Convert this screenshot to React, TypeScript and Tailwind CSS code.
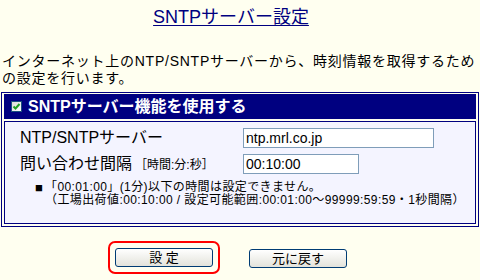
import React from 'react';

const font = "font-['Liberation_Sans','Noto_Sans_CJK_JP',sans-serif]";

function Check() {
  return (
    <span className="flex w-[11px] h-[11px] items-center justify-center bg-linear-to-br from-[#dcdcd6] to-white border border-[#1c5180]">
      <svg width="9" height="9" viewBox="0 0 9 9">
        <path d="M1.5 4.5 L3.5 6.5 L7.5 2" stroke="#21a121" strokeWidth="2" fill="none" />
      </svg>
    </span>
  );
}

function Button({ label }: { label: string }) {
  return (
    <button className="w-[98px] h-[19px] rounded-[3px] border border-[#003c74] bg-linear-to-b from-white to-[#e3e3db] text-[13px] leading-[17px] text-black">
      {label}
    </button>
  );
}

export default function App() {
  return (
    <div className={`w-[480px] h-[280px] bg-[#fffff0] text-black ${font}`}>
      <div className="pt-[6px] pr-[18px] text-center">
        <span className="text-[18px] leading-[20px] text-[#000080] underline underline-offset-2">
          SNTPサーバー設定
        </span>
      </div>

      <div className="mt-[23px] pl-[2px] text-[14px] leading-[17px] tracking-[0.75px] whitespace-nowrap">
        <div>インターネット上のNTP/SNTPサーバーから、時刻情報を取得するため</div>
        <div>の設定を行います。</div>
      </div>

      <div className="mt-[5px] ml-[1px] w-[478px] border border-[#000080] pt-[1px] px-[2px] pb-[2px] flex flex-col gap-[2px]">
        <div className="h-[25px] bg-[#000080] flex items-center pl-[7px] gap-[6px]">
          <Check />
          <span className="text-white font-bold text-[16px] leading-[20px]">SNTPサーバー機能を使用する</span>
        </div>

        <div className="h-[103px] border border-[#000080] bg-[#f4f4ff] pt-[6px] pl-[15px]">
          <div className="flex items-center h-[20px]">
            <span className="w-[223px] text-[16px] leading-[20px]">NTP/SNTPサーバー</span>
            <input
              readOnly
              defaultValue="ntp.mrl.co.jp"
              className="w-[191px] h-[20px] bg-white border border-[#7f9db9] px-[2px] text-[14px] outline-none"
            />
          </div>
          <div className="flex items-center h-[20px] mt-[6px]">
            <span className="w-[223px] text-[16px] leading-[20px]">
              問い合わせ間隔<span className="ml-[3px] text-[12px]">［時間:分:秒］</span>
            </span>
            <input
              readOnly
              defaultValue="00:10:00"
              className="w-[116px] h-[20px] bg-white border border-[#7f9db9] px-[2px] text-[14px] outline-none"
            />
          </div>
          <div className="flex mt-[7px] ml-[15px] text-[12px] leading-[13px] tracking-[0.4px]">
            <span className="w-[10px] text-[13px]">■</span>
            <div>
              <div>「00:01:00」(1分)以下の時間は設定できません。</div>
              <div>（工場出荷値:00:10:00 / 設定可能範囲:00:01:00～99999:59:59・1秒間隔）</div>
            </div>
          </div>
        </div>
      </div>

      <div className="flex items-center mt-[14px] ml-[108px]">
        <div className="w-[112px] h-[33px] rounded-[7px] border-2 border-[#ff0000] flex items-center justify-center">
          <Button label="設 定" />
        </div>
        <div className="ml-[29px]">
          <Button label="元に戻す" />
        </div>
      </div>
    </div>
  );
}
